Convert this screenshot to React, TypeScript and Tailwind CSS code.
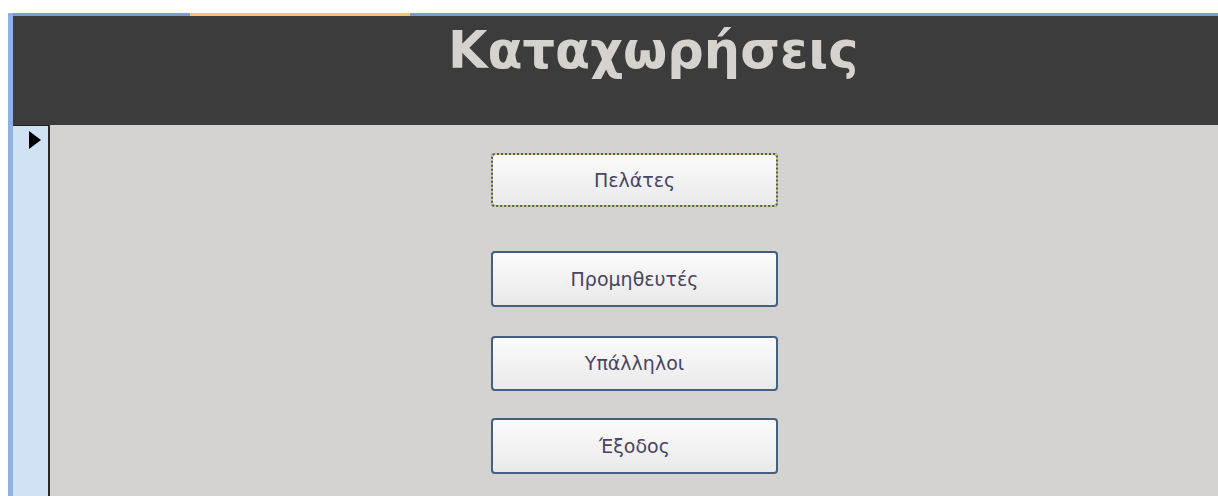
import { ReactNode } from "react";

interface NavButtonProps {
  children: ReactNode;
  focused?: boolean;
  className?: string;
}

const NavButton = ({ children, focused, className = "" }: NavButtonProps) => {
  return (
    <button
      className={
        "w-[287px] rounded-[4px] border-2 border-[#44607e] bg-gradient-to-b from-[#fbfbfb] to-[#e9e9e9] text-[19px] text-[#4a4560] " +
        (focused ? "outline-2 outline-dotted outline-[#e8c46a] -outline-offset-2 " : "") +
        className
      }
      style={{ fontFamily: '"DejaVu Sans", sans-serif' }}
    >
      {children}
    </button>
  );
};

const App = () => {
  return (
    <div className="w-[1218px] h-[496px] bg-white pt-[13px] pl-[8px] overflow-hidden">
      <div className="h-full flex flex-col border-l-[5px] border-[#8db2e3]">
        {/* Header */}
        <div className="relative h-[112px] shrink-0 bg-[#3c3c3c] border-t-[3px] border-[#7b9cd0]">
          <div className="absolute -top-[3px] left-[177px] w-[220px] h-[3px] bg-[#f3c865]" />
          <h1
            className="pl-[435px] pt-[9px] text-[51px] font-bold leading-none text-[#d6d3ce]"
            style={{ fontFamily: '"DejaVu Sans", sans-serif' }}
          >
            Καταχωρήσεις
          </h1>
        </div>

        {/* Body */}
        <div className="flex flex-1">
          <div className="w-[37px] shrink-0 bg-[#d1e2f4] border-r-2 border-[#2a2a2a]">
            <div className="h-[28px] border-t border-[#222] flex items-start pl-[16px] pt-[5px]">
              <svg width="12" height="18" viewBox="0 0 12 18">
                <path d="M0 0 L12 9 L0 18 Z" fill="#000" />
              </svg>
            </div>
          </div>
          <div className="flex-1 bg-[#d4d3d1] pl-[441px] pt-[28px] flex flex-col">
            <NavButton focused className="h-[54px]">Πελάτες</NavButton>
            <NavButton className="h-[56px] mt-[44px]">Προμηθευτές</NavButton>
            <NavButton className="h-[55px] mt-[29px]">Υπάλληλοι</NavButton>
            <NavButton className="h-[56px] mt-[27px]">Έξοδος</NavButton>
          </div>
        </div>
      </div>
    </div>
  );
};

export default App;
